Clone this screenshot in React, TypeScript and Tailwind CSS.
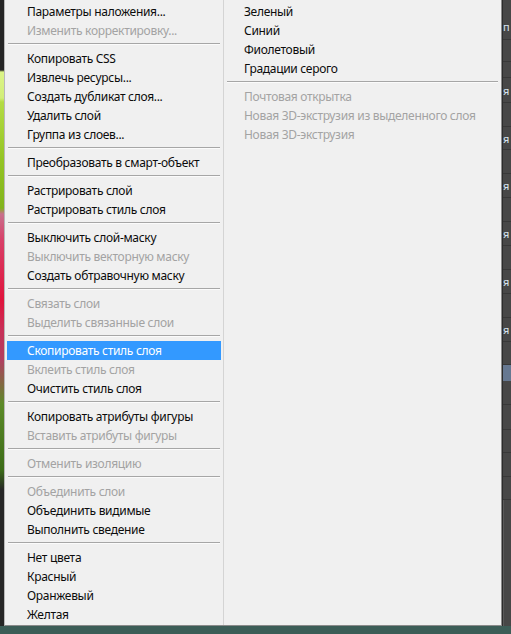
type Item = { t?: string; d?: boolean; hl?: boolean; sep?: boolean };

const SEP: Item = { sep: true };

const left: Item[] = [
  { t: "Параметры наложения..." },
  { t: "Изменить корректировку...", d: true },
  SEP,
  { t: "Копировать CSS" },
  { t: "Извлечь ресурсы..." },
  { t: "Создать дубликат слоя..." },
  { t: "Удалить слой" },
  { t: "Группа из слоев..." },
  SEP,
  { t: "Преобразовать в смарт-объект" },
  SEP,
  { t: "Растрировать слой" },
  { t: "Растрировать стиль слоя" },
  SEP,
  { t: "Выключить слой-маску" },
  { t: "Выключить векторную маску", d: true },
  { t: "Создать обтравочную маску" },
  SEP,
  { t: "Связать слои", d: true },
  { t: "Выделить связанные слои", d: true },
  SEP,
  { t: "Скопировать стиль слоя", hl: true },
  { t: "Вклеить стиль слоя", d: true },
  { t: "Очистить стиль слоя" },
  SEP,
  { t: "Копировать атрибуты фигуры" },
  { t: "Вставить атрибуты фигуры", d: true },
  SEP,
  { t: "Отменить изоляцию", d: true },
  SEP,
  { t: "Объединить слои", d: true },
  { t: "Объединить видимые" },
  { t: "Выполнить сведение" },
  SEP,
  { t: "Нет цвета" },
  { t: "Красный" },
  { t: "Оранжевый" },
  { t: "Желтая" },
];

const right: Item[] = [
  { t: "Зеленый" },
  { t: "Синий" },
  { t: "Фиолетовый" },
  { t: "Градации серого" },
  SEP,
  { t: "Почтовая открытка", d: true },
  { t: "Новая 3D-экструзия из выделенного слоя", d: true },
  { t: "Новая 3D-экструзия", d: true },
];

function MenuColumn({ items, pad }: { items: Item[]; pad: string }) {
  return (
    <div className="flex flex-col py-[2px]">
      {items.map((it, i) =>
        it.sep ? (
          <div key={i} className="flex h-[9px] flex-col px-[3px] pt-[3px]">
            <div className="h-px bg-[#a6a6a6]" />
            <div className="h-px bg-[#fbfbfb]" />
          </div>
        ) : (
          <div
            key={i}
            className={
              "mx-[2px] flex h-[19px] items-center whitespace-nowrap tracking-[-0.3px] " +
              pad +
              (it.hl
                ? " bg-[#3399ff] text-white"
                : it.d
                  ? " text-[#a3a3a3]"
                  : " text-[#0c0c0c]")
            }
          >
            {it.t}
          </div>
        )
      )}
    </div>
  );
}

function SidePanel() {
  const rows = [40, 22, 16, 25, 24, 23, 24, 24, 24, 24, 24, 24, 24, 24, 23];
  const after = [24, 25, 23, 24, 23];
  return (
    <div className="flex w-[9px] flex-col overflow-hidden border-l border-[#2c2c2c] bg-[#474747]">
      {rows.map((h, i) => (
        <div
          key={i}
          style={{ height: h }}
          className="flex items-center overflow-hidden border-b border-[#383838] text-[11px] leading-none text-[#d8e4f0]"
        >
          {i === 0 ? <span className="pt-[14px]">п</span> : i % 2 === 1 && i >= 3 && i <= 13 ? "я" : ""}
        </div>
      ))}
      <div className="h-[16px] bg-[#667891]" />
      {after.map((h, i) => (
        <div key={i} style={{ height: h }} className="border-b border-[#383838]" />
      ))}
      <div className="flex-1 border-l border-[#5a5a5a]" />
    </div>
  );
}

export default function App() {
  return (
    <div
      className="flex h-[634px] w-[511px] flex-col overflow-hidden bg-[#2b2b2b] text-[12px]"
      style={{ fontFamily: '"Noto Sans", "Open Sans", sans-serif' }}
    >
      <div className="flex h-[626px]">
        <div className="w-[4px] bg-[linear-gradient(to_bottom,#252525_0px,#252525_70px,#dcf488_72px,#d2ee78_98px,#b4dc44_102px,#94c424_160px,#82b41c_208px,#c8708c_214px,#d84068_240px,#e0143c_300px,#c83058_330px,#b04060_360px,#5c8a28_404px,#3c6c18_470px,#262626_490px,#262626_626px)]" />
        <div className="flex w-[498px] border border-t-0 border-l-[#b8b8b8] border-r-[#8a8a8a] border-b-[#8a8a8a] bg-[#f0f0f0]">
          <div className="w-[219px] border-r border-[#d4d4d4]">
            <MenuColumn items={left} pad="pl-[20px]" />
          </div>
          <div className="flex-1">
            <MenuColumn items={right} pad="pl-[18px]" />
          </div>
        </div>
        <SidePanel />
      </div>
      <div className="h-[8px] bg-[#3c5d57]" />
    </div>
  );
}
